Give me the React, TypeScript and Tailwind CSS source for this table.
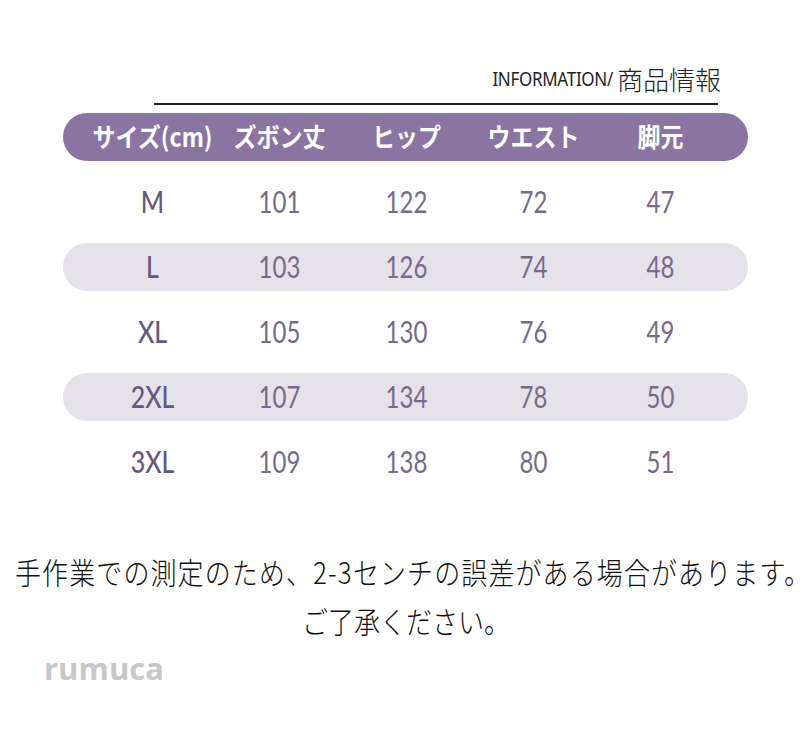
import React from "react";

const rows = [
  ["M", "101", "122", "72", "47"],
  ["L", "103", "126", "74", "48"],
  ["XL", "105", "130", "76", "49"],
  ["2XL", "107", "134", "78", "50"],
  ["3XL", "109", "138", "80", "51"],
];

const headers = ["サイズ(cm)", "ズボン丈", "ヒップ", "ウエスト", "脚元"];

export default function App() {
  return (
    <div
      className="w-[812px] h-[736px] bg-white overflow-hidden relative"
      style={{ fontFamily: '"Noto Sans", "Noto Sans CJK JP", sans-serif' }}
    >
      {/* title */}
      <div className="flex justify-end items-end h-[96px] pr-[91px]">
        <span className="text-[17px] leading-none text-[#222] tracking-[-0.3px] mb-[8px] scale-y-[1.15] origin-bottom">
          INFORMATION/
        </span>
        <span className="text-[26px] leading-none text-[#222] font-light ml-[4px] mb-[4px]" style={{ fontFamily: '"Noto Sans CJK JP", sans-serif' }}>
          商品情報
        </span>
      </div>
      <div className="ml-[154px] w-[564px] h-[1.5px] bg-[#222] mt-[7px]" />

      {/* table */}
      <div className="ml-[63px] w-[685px] mt-[8px] flex flex-col gap-[17px]">
        <div className="h-[48px] rounded-full bg-[#8a74a2] grid grid-cols-[repeat(5,127px)] pl-[26px] items-center">
          {headers.map((h) => (
            <div
              key={h}
              className="text-center text-white text-[23px] font-bold leading-none scale-y-[1.12]"
              style={{ fontFamily: '"Noto Sans CJK JP", sans-serif' }}
            >
              {h}
            </div>
          ))}
        </div>
        {rows.map((r, i) => (
          <div
            key={r[0]}
            className={`h-[48px] rounded-full grid grid-cols-[repeat(5,127px)] pl-[26px] items-center ${
              i % 2 === 1 ? "bg-[#e5e2ea]" : ""
            }`}
          >
            {r.map((c, j) => (
              <div
                key={j}
                className={`text-center leading-none scale-y-[1.25] ${
                  j === 0 ? "text-[25px] font-medium text-[#66577f]" : "text-[24px] font-normal text-[#766b8c]"
                }`}
                style={{ fontFamily: 'Lato, "Noto Sans", sans-serif' }}
              >
                {c}
              </div>
            ))}
          </div>
        ))}
      </div>

      {/* note */}
      <div
        className="mt-[72px] flex flex-col items-center text-[#111] text-[26px] leading-none gap-[23px] font-light"
        style={{ fontFamily: '"Noto Sans CJK JP", sans-serif' }}
      >
        <div className="scale-y-[1.15] whitespace-nowrap tracking-[1.1px] pl-[14px]">手作業での測定のため、2-3センチの誤差がある場合があります。</div>
        <div className="scale-y-[1.15]">ご了承ください。</div>
      </div>

      <div
        className="ml-[44px] mt-[20px] text-[31px] font-bold text-[#c7c7c7] leading-none"
        style={{ fontFamily: '"Open Sans", sans-serif' }}
      >
        rumuca
      </div>
    </div>
  );
}
